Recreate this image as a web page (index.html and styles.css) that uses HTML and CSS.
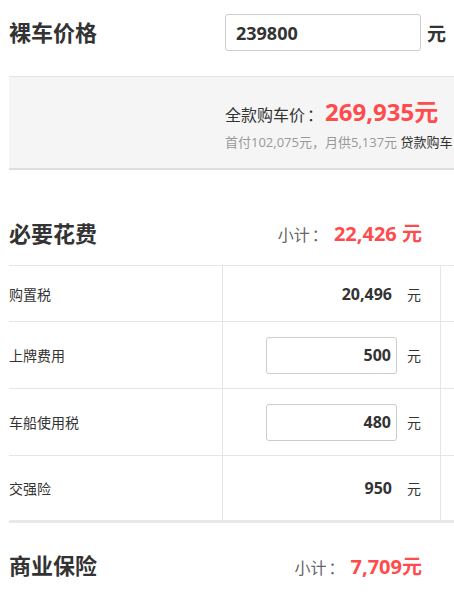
FILE: index.html
```html
<!DOCTYPE html>
<html lang="zh-CN">
<head>
  <meta charset="UTF-8">
  <meta name="viewport" content="width=device-width, initial-scale=1.0">
  <title>购车计算器</title>
  <link rel="stylesheet" href="styles.css">
</head>
<body>
  <div class="calc">
    <div class="price-row">
      <h2 class="title">裸车价格</h2>
      <div class="price-input">
        <input type="text" class="ipt ipt-big" value="239800">
        <span class="unit-big">元</span>
      </div>
    </div>

    <div class="summary">
      <p class="total">全款购车价<span class="pun colon">：</span><em>269,935元</em></p>
      <p class="loan">首付102,075元<span class="pun">，</span>月供5,137元 <a href="javascript:;">贷款购车</a></p>
    </div>

    <div class="sec-head">
      <h2 class="title">必要花费</h2>
      <p class="subtotal">小计<span class="pun colon">：</span> <em>22,426 元</em></p>
    </div>

    <ul class="fees">
      <li class="fee">
        <span class="name">购置税</span>
        <span class="val"><b class="num">20,496</b><i class="unit">元</i></span>
        <span class="extra"></span>
      </li>
      <li class="fee fee-h">
        <span class="name">上牌费用</span>
        <span class="val"><input type="text" class="ipt ipt-sm" value="500"><i class="unit">元</i></span>
        <span class="extra"></span>
      </li>
      <li class="fee fee-h">
        <span class="name">车船使用税</span>
        <span class="val"><input type="text" class="ipt ipt-sm" value="480"><i class="unit">元</i></span>
        <span class="extra"></span>
      </li>
      <li class="fee fee-last">
        <span class="name">交强险</span>
        <span class="val"><b class="num">950</b><i class="unit">元</i></span>
        <span class="extra"></span>
      </li>
    </ul>

    <div class="sec-head sec-head2">
      <h2 class="title">商业保险</h2>
      <p class="subtotal">小计<span class="pun colon">：</span> <em>7,709元</em></p>
    </div>
  </div>
</body>
</html>
```

FILE: styles.css
```css
*{
  box-sizing: border-box;
}

html, body{
  margin: 0;
  padding: 0;
  overflow: hidden;
  background-color: #fff;
}

body{
  font-family: "Open Sans", "Noto Sans CJK SC", sans-serif;
  color: #333;
}

h2, p, ul{
  margin: 0;
  padding: 0;
  list-style: none;
}

em, i{
  font-style: normal;
}

a{
  color: #333;
  text-decoration: none;
}

/* 全角标点占满一个字宽 */
.pun{
  display: inline-block;
  width: 1em;
  text-align: center;
}

.colon{
  width: 1.25em;
}

.calc{
  width: 520px;
  padding-left: 9px;
}

.title{
  font-size: 22px;
  font-weight: bold;
  color: #333;
  line-height: 30px;
}

/* 裸车价格 */
.price-row{
  display: flex;
  align-items: flex-start;
  justify-content: space-between;
  width: 437px;
  height: 76px;
  padding-top: 14px;
}

.price-row .title{
  margin-top: 3px;
}

.price-input{
  display: flex;
  align-items: center;
}

.ipt{
  border: 1px solid #ccc;
  border-radius: 3px;
  font-family: "Open Sans", sans-serif;
  font-weight: bold;
  color: #333;
  outline: none;
  background: #fff;
}

.ipt-big{
  width: 196px;
  height: 37px;
  padding: 0 10px;
  font-size: 18px;
}

.unit-big{
  margin-left: 6px;
  font-size: 19px;
  font-weight: bold;
}

/* 全款 */
.summary{
  height: 94px;
  background-color: #f5f5f5;
  border-top: 1px solid #e3e3e3;
  border-bottom: 2px solid #dedede;
  padding: 19px 0 0 216px;
}

.total{
  font-size: 16px;
  line-height: 32px;
  white-space: nowrap;
}

.total em{
  color: #ff4b4b;
  font-size: 24px;
  font-weight: bold;
}

.loan{
  margin-top: 2px;
  font-size: 13px;
  line-height: 18px;
  color: #999;
  white-space: nowrap;
}

/* 必要花费 */
.sec-head{
  display: flex;
  align-items: center;
  justify-content: space-between;
  width: 413px;
  height: 95px;
  padding-top: 30px;
}

.subtotal{
  font-size: 16px;
  color: #666;
}

.subtotal em{
  color: #ff4b4b;
  font-size: 20px;
  font-weight: bold;
}

.fees{
  border-top: 1px solid #e5e5e5;
  border-bottom: 3px solid #e8e8e8;
}

.fee{
  display: flex;
  height: 56px;
  border-bottom: 1px solid #e5e5e5;
}

.fee-h{
  height: 67px;
}

.fee-last{
  height: 64px;
  border-bottom: none;
}

.fee .name{
  width: 214px;
  display: flex;
  align-items: center;
  font-size: 14px;
  border-right: 1px solid #e5e5e5;
}

.fee .val{
  width: 218px;
  display: flex;
  align-items: center;
  justify-content: flex-end;
  padding-right: 19px;
  border-right: 1px solid #e5e5e5;
}

.fee .num{
  font-size: 16px;
  padding-right: 5px;
}

.ipt-sm{
  width: 131px;
  height: 37px;
  padding: 0 5px;
  text-align: right;
  font-size: 16px;
}

.fee .unit{
  margin-left: 10px;
  font-size: 14px;
}

.fee .extra{
  flex: 1;
}

.sec-head2{
  height: 72px;
  padding-top: 12px;
}
```
